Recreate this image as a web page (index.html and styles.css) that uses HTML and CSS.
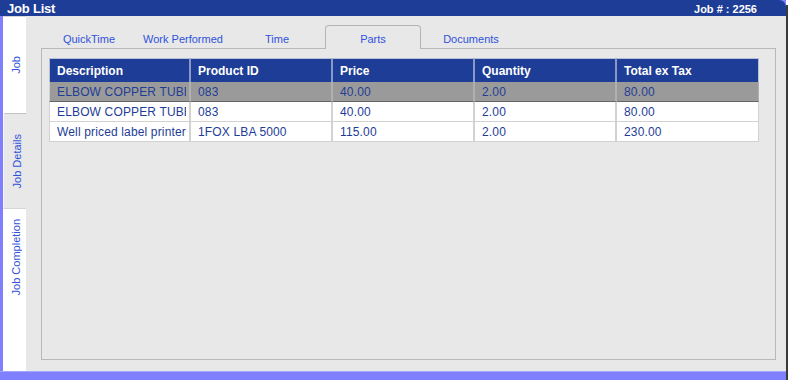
FILE: index.html
```html
<!DOCTYPE html>
<html lang="en">
<head>
<meta charset="utf-8">
<title>Job List</title>
<link rel="stylesheet" href="styles.css">
</head>
<body>
<div class="frame">
  <div class="window">
    <header class="titlebar">
      <span class="title">Job List</span>
      <span class="jobno">Job # : 2256</span>
    </header>
    <div class="middle">
      <nav class="vtabs">
        <div class="vtab"><span>Job</span></div>
        <div class="vtab active"><span>Job Details</span></div>
        <div class="vtab"><span>Job Completion</span></div>
      </nav>
      <main class="content">
        <div class="tabs">
          <div class="tab">QuickTime</div>
          <div class="tab">Work Performed</div>
          <div class="tab">Time</div>
          <div class="tab active">Parts</div>
          <div class="tab">Documents</div>
        </div>
        <section class="panel">
          <div class="grid">
            <div class="hcell">Description</div>
            <div class="hcell">Product ID</div>
            <div class="hcell">Price</div>
            <div class="hcell">Quantity</div>
            <div class="hcell">Total ex Tax</div>

            <div class="cell sel"><span>ELBOW COPPER TUBE</span></div>
            <div class="cell sel"><span>083</span></div>
            <div class="cell sel"><span>40.00</span></div>
            <div class="cell sel"><span>2.00</span></div>
            <div class="cell sel"><span>80.00</span></div>

            <div class="cell"><span>ELBOW COPPER TUBE</span></div>
            <div class="cell"><span>083</span></div>
            <div class="cell"><span>40.00</span></div>
            <div class="cell"><span>2.00</span></div>
            <div class="cell"><span>80.00</span></div>

            <div class="cell"><span>Well priced label printer</span></div>
            <div class="cell"><span>1FOX LBA 5000</span></div>
            <div class="cell"><span>115.00</span></div>
            <div class="cell"><span>2.00</span></div>
            <div class="cell"><span>230.00</span></div>
          </div>
        </section>
      </main>
    </div>
    <div class="bottombar"></div>
  </div>
  <div class="edge"></div>
</div>
</body>
</html>
```

FILE: styles.css
```css
* { box-sizing: border-box; }

html, body {
  margin: 0;
  padding: 0;
  background: #ffffff;
  font-family: "Liberation Sans", Arial, sans-serif;
}

.frame {
  display: flex;
  width: 788px;
  height: 380px;
}

.window {
  width: 786px;
  height: 380px;
  display: grid;
  grid-template-rows: 16px 1fr 9px;
  background: #8080ff;
}

.edge {
  width: 2px;
  margin-top: 5px;
  background: #3a3a3a;
}

.titlebar {
  background: #1e3d96;
  border-top-right-radius: 7px;
  display: flex;
  justify-content: space-between;
  align-items: center;
  padding: 1px 29px 0 7px;
  color: #ffffff;
  font-weight: bold;
}

.title {
  font-size: 13px;
  letter-spacing: -0.2px;
}

.jobno {
  font-size: 11px;
}

.middle {
  display: flex;
  padding-left: 3px;
  min-height: 0;
}

.vtabs {
  width: 23px;
  background: #ffffff;
  display: flex;
  flex-direction: column;
  border-top: 1px solid #d8d8d8;
}

.vtab {
  height: 96px;
  display: flex;
  align-items: center;
  justify-content: center;
  padding-left: 3px;
}

.vtab span {
  writing-mode: vertical-rl;
  transform: rotate(180deg);
  font-size: 11px;
  color: #2f52dc;
  white-space: nowrap;
}

.vtab.active {
  background: #e8e8e8;
  border-top: 1px solid #c2c2c2;
  border-left: 1px solid #f6f6f6;
  border-bottom: 1px solid #d6d6d6;
  border-top-left-radius: 3px;
}

.content {
  flex: 1;
  background: #e8e8e8;
  padding: 9px 10px 11px 15px;
  display: flex;
  flex-direction: column;
}

.tabs {
  display: grid;
  grid-template-columns: 96px 92px 96px 96px 100px;
  height: 24px;
  margin-bottom: -1px;
}

.tab {
  display: flex;
  align-items: center;
  justify-content: center;
  padding-top: 3px;
  font-size: 11px;
  color: #2f52dc;
  white-space: nowrap;
}

.tab.active {
  position: relative;
  z-index: 1;
  background: #e8e8e8;
  border: 1px solid #b4b4b4;
  border-bottom: none;
  border-radius: 4px 4px 0 0;
}

.panel {
  flex: 1;
  border: 1px solid #b8b8b8;
  padding: 9px 0 0 7px;
}

.grid {
  width: 710px;
  display: grid;
  grid-template-columns: repeat(5, 142px);
  grid-auto-rows: 20px;
  grid-template-rows: 24px;
}

.hcell {
  background: #1e3d96;
  color: #ffffff;
  font-weight: bold;
  font-size: 12px;
  padding-left: 7px;
  display: flex;
  align-items: center;
  border-right: 2px solid #8a98c6;
  border-top: 1px solid #b8c0d8;
}

.hcell:nth-child(5n+1) {
  border-left: 1px solid #b8c0d8;
}

.hcell:nth-child(5n) {
  border-right: 1px solid #b8c0d8;
}

.cell {
  background: #ffffff;
  color: #1e3d96;
  font-size: 12px;
  padding: 1px 3px 0 7px;
  display: flex;
  align-items: center;
  border-right: 2px solid #d2d2d2;
  border-bottom: 1px solid #d2d2d2;
  letter-spacing: 0.15px;
}

.cell:nth-child(5n+1) {
  border-left: 1px solid #d2d2d2;
}

.cell:nth-child(5n) {
  border-right: 1px solid #d2d2d2;
}

.cell span {
  display: block;
  overflow: hidden;
  white-space: nowrap;
}

.cell.sel {
  background: #9a9a9a;
  border-right-color: #b0b0b0;
  border-bottom: 1px solid #656565;
}

.bottombar {
  background: #8080ff;
  border-top: 1px solid #a6a6ff;
  border-bottom-right-radius: 8px;
}
```
